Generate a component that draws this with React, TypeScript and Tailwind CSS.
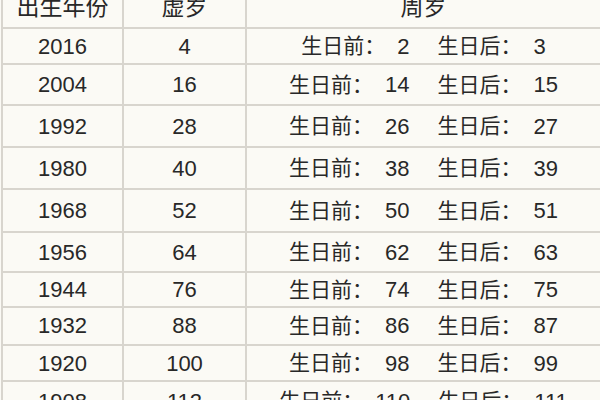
import React from 'react';

const rows = [
  { year: 2016, xu: 4, before: 2, after: 3, h: 'h-[36px]' },
  { year: 2004, xu: 16, before: 14, after: 15, h: 'h-[41px]' },
  { year: 1992, xu: 28, before: 26, after: 27, h: 'h-[42px]' },
  { year: 1980, xu: 40, before: 38, after: 39, h: 'h-[42px]' },
  { year: 1968, xu: 52, before: 50, after: 51, h: 'h-[43px]' },
  { year: 1956, xu: 64, before: 62, after: 63, h: 'h-[40px]' },
  { year: 1944, xu: 76, before: 74, after: 75, h: 'h-[34px]' },
  { year: 1932, xu: 88, before: 86, after: 87, h: 'h-[39px]' },
  { year: 1920, xu: 100, before: 98, after: 99, h: 'h-[36px]' },
  { year: 1908, xu: 112, before: 110, after: 111, h: 'h-[40px]' },
];

const cell = 'flex items-center justify-center border-b-2 border-[#d8d5ce]';

export default function App() {
  return (
    <div
      className="w-[600px] h-[400px] overflow-hidden bg-[#fbfaf5] text-[#282828]"
      style={{ fontFamily: '"Liberation Sans", "Noto Sans CJK SC", sans-serif' }}
    >
      <div className="-mt-[12px] ml-[1px] border-l-2 border-[#d8d5ce]">
        {/* header */}
        <div className="grid grid-cols-[121px_123px_1fr] h-[41px] text-[23px]">
          <div className={`${cell} border-r-2`}>出生年份</div>
          <div className={`${cell} border-r-2`}>虚岁</div>
          <div className={cell}>周岁</div>
        </div>

        {rows.map((r) => (
          <div key={r.year} className={`grid grid-cols-[121px_123px_1fr] ${r.h} text-[22px]`}>
            <div className={`${cell} border-r-2`}>{r.year}</div>
            <div className={`${cell} border-r-2`}>{r.xu}</div>
            <div className={`${cell} gap-[28px] text-[21px]`}>
              <span className="flex items-center">
                <span>生日前：</span>
                <span className="ml-[12px] text-[22px]">{r.before}</span>
              </span>
              <span className="flex items-center">
                <span>生日后：</span>
                <span className="ml-[12px] text-[22px]">{r.after}</span>
              </span>
            </div>
          </div>
        ))}
      </div>
    </div>
  );
}
